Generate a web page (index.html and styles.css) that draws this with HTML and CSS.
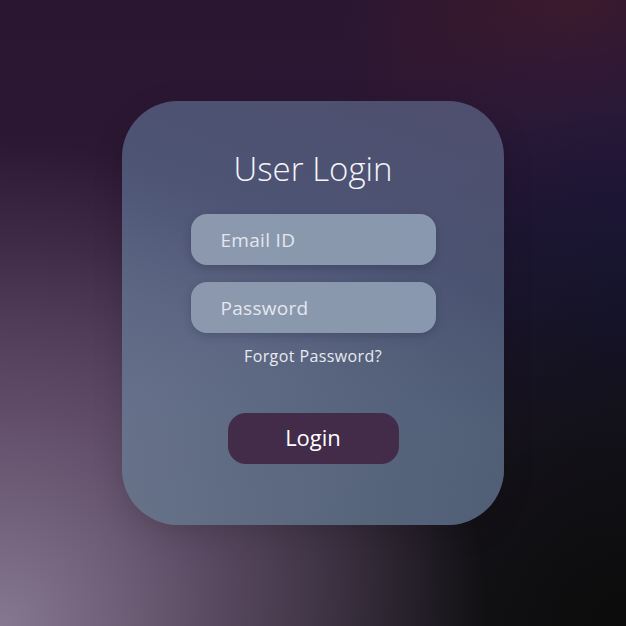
FILE: index.html
```html
<!DOCTYPE html>
<html lang="en">

<head>
    <meta charset="UTF-8">
    <meta name="viewport" content="width=device-width, initial-scale=1.0">
    <title>User Login</title>
    <link rel="stylesheet" href="styles.css">
</head>

<body>
    <div class="card">
        <h1>User Login</h1>
        <input class="field" type="email" placeholder="Email ID">
        <input class="field" type="password" placeholder="Password">
        <a href="#" class="forgot">Forgot Password?</a>
        <button class="login-btn">Login</button>
    </div>
</body>

</html>
```

FILE: styles.css
```css
html,
body {
    height: 100%;
}

body {
    margin: 0;
    display: flex;
    justify-content: center;
    align-items: center;
    font-family: 'Open Sans', sans-serif;
    background-color: #241a2c;
    background-image:
        radial-gradient(circle at 0% 100%, #877891 0%, rgba(110, 90, 118, 0.7) 25%, rgba(60, 40, 70, 0) 55%),
        radial-gradient(circle at 100% 100%, #0b0b0b 0%, rgba(14, 14, 16, 0.85) 22%, rgba(20, 18, 30, 0) 60%),
        radial-gradient(circle at 100% 48%, #1d1a48 0%, rgba(29, 24, 70, 0.6) 20%, rgba(29, 24, 70, 0) 45%),
        radial-gradient(circle at 92% 2%, #3d1a2c 0%, rgba(50, 24, 44, 0) 28%),
        linear-gradient(180deg, #2a1631 0%, #2d1835 40%, #3e2a48 70%, #2a2230 100%);
}

.card {
    width: 382px;
    height: 424px;
    box-sizing: border-box;
    padding-top: 48px;
    border-radius: 56px;
    display: flex;
    flex-direction: column;
    align-items: center;
    background: linear-gradient(200deg, #4f4f6e 0%, #4d5474 35%, #5e6884 60%, #6f7990 100%);
    box-shadow: 0 8px 30px rgba(0, 0, 0, 0.15);
    position: relative;
    overflow: hidden;
}

.card::before {
    content: '';
    position: absolute;
    inset: 0;
    background: linear-gradient(145deg, rgba(80, 80, 112, 0) 45%, rgba(62, 82, 100, 0.55) 100%);
    pointer-events: none;
}

.card > * {
    position: relative;
}

h1 {
    margin: 0;
    font-size: 33px;
    line-height: 40px;
    font-weight: 300;
    color: #f5f5fa;
}

.field {
    width: 245px;
    height: 51px;
    box-sizing: border-box;
    margin-top: 25px;
    padding: 0 0 0 30px;
    border: none;
    border-radius: 16px;
    background: linear-gradient(90deg, #8b98ad, #8998ae);
    box-shadow: 0 3px 8px rgba(30, 30, 60, 0.25);
    font-family: inherit;
    font-size: 19px;
    letter-spacing: 0.3px;
    color: #eef1f6;
    outline: none;
}

.field + .field {
    margin-top: 17px;
}

.field::placeholder {
    color: #e2e7ef;
}

.forgot {
    margin-top: 13px;
    line-height: 20px;
    font-size: 16px;
    letter-spacing: 0.4px;
    color: #e8eaf2;
    text-decoration: none;
}

.login-btn {
    margin-top: 47px;
    width: 171px;
    height: 51px;
    padding: 0 0 4px;
    border: none;
    border-radius: 18px;
    background-color: #432b4a;
    color: #ffffff;
    font-family: inherit;
    font-size: 22px;
    font-weight: 500;
    cursor: pointer;
}
```
